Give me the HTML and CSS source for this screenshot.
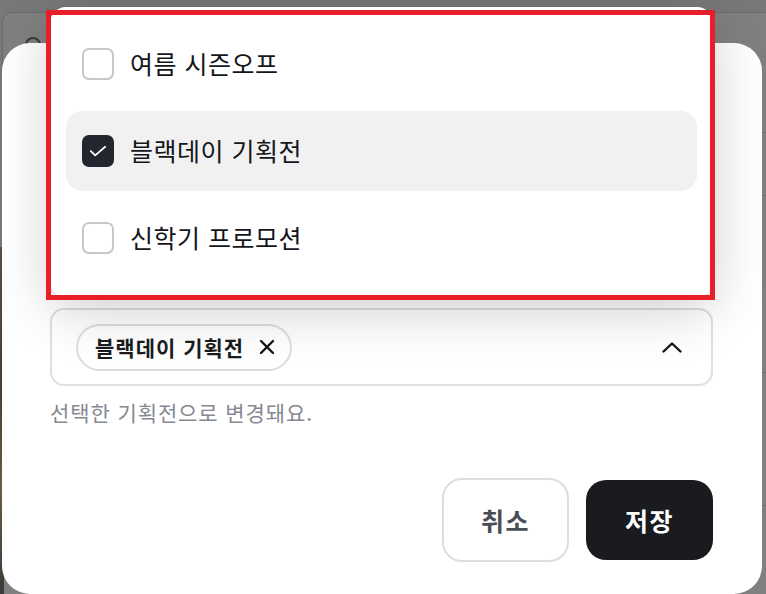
FILE: index.html
```html
<!DOCTYPE html>
<html lang="ko">
<head>
<meta charset="utf-8">
<title>기획전 선택</title>
<link rel="stylesheet" href="styles.css">
</head>
<body>
<div class="page">
  <div class="card">
    <div class="card-head"><span class="avatar"></span></div>
    <div class="card-body">
      <div class="photo"></div>
      <div class="rows">
        <div class="row r1"></div>
        <div class="row r2"></div>
        <div class="row r3"></div>
        <div class="row r4"></div>
      </div>
    </div>
  </div>
</div>

<div class="modal">
  <div class="select">
    <span class="chip">블랙데이 기획전
      <svg class="chip-x" width="16" height="16" viewBox="0 0 16 16"><path d="M2 2L14 14M14 2L2 14" stroke="#141518" stroke-width="2.4" stroke-linecap="round"/></svg>
    </span>
    <svg class="chev" width="20" height="11" viewBox="0 0 20 11"><path d="M1.5 9.5L10 1.5L18.5 9.5" fill="none" stroke="#141518" stroke-width="2.4" stroke-linecap="round" stroke-linejoin="round"/></svg>
  </div>
  <p class="helper">선택한 기획전으로 변경돼요.</p>
  <div class="actions">
    <button class="btn btn-cancel">취소</button>
    <button class="btn btn-save">저장</button>
  </div>
</div>

<div class="popover">
  <div class="option">
    <span class="box"></span>
    <span class="label">여름 시즌오프</span>
  </div>
  <div class="option selected">
    <span class="box checked">
      <svg width="32" height="32" viewBox="0 0 32 32"><path d="M8.8 16.2L13.2 20.4L23.2 11.8" fill="none" stroke="#fff" stroke-width="1.8" stroke-linecap="round" stroke-linejoin="round"/></svg>
    </span>
    <span class="label">블랙데이 기획전</span>
  </div>
  <div class="option">
    <span class="box"></span>
    <span class="label">신학기 프로모션</span>
  </div>
</div>

<div class="highlight"></div>
</body>
</html>
```

FILE: styles.css
```css
* { box-sizing: border-box; }

html, body {
  margin: 0;
  padding: 0;
}

body {
  width: 766px;
  height: 594px;
  overflow: hidden;
  position: relative;
  background: #787878;
  font-family: "Noto Sans CJK KR", "Noto Sans", sans-serif;
}

/* dimmed page beneath */
.page {
  padding-top: 12px;
  height: 594px;
}

.card {
  margin-left: 2px;
  height: 582px;
  border-top: 1px solid #6c6c6c;
  border-left: 1px solid #6c6c6c;
  border-top-left-radius: 10px;
  background: #808080;
  display: flex;
  flex-direction: column;
}

.card-head {
  height: 40px;
  padding: 24px 0 0 22px;
}

.avatar {
  display: block;
  width: 16px;
  height: 16px;
  border: 2px solid #3a3a3a;
  border-radius: 50%;
}

.card-body {
  flex: 1;
  display: flex;
  justify-content: space-between;
}

.photo {
  width: 4px;
  margin-top: 194px;
  margin-left: -3px;
  background: linear-gradient(#5a4e44, #4a3d32 40%, #6a5a48 70%, #3e3a36);
}

.rows {
  width: 30px;
  display: flex;
  flex-direction: column;
}

.row { border-bottom: 1px solid #6e6e6e; }
.r1 { height: 80px; }
.r2 { height: 63px; }
.r3 { height: 177px; }
.r4 { height: 133px; }

/* modal */
.modal {
  position: absolute;
  left: 2px;
  top: 43px;
  width: 760px;
  height: 551px;
  background: #fff;
  border-radius: 28px;
  padding: 265px 49px 0 48px;
}

.select {
  height: 78px;
  border: 2px solid #dedfe3;
  border-radius: 14px;
  display: flex;
  align-items: center;
  justify-content: space-between;
  padding: 0 29px 0 24px;
}

.chip {
  height: 47px;
  border: 2px solid #dcdde2;
  border-radius: 24px;
  display: flex;
  align-items: center;
  gap: 15px;
  padding: 0 15px 0 17px;
  font-size: 21px;
  letter-spacing: 1px;
  font-weight: 700;
  color: #1b1c20;
  background: #fff;
}

.chip-x { display: block; }
.chev { display: block; }

.helper {
  margin: 12px 0 0 0;
  font-size: 21px;
  letter-spacing: 0.9px;
  line-height: 28px;
  color: #868991;
}

.actions {
  margin-top: 52px;
  display: flex;
  justify-content: flex-end;
  align-items: center;
  gap: 17px;
}

.btn {
  font-family: "Noto Sans CJK KR", "Noto Sans", sans-serif;
  font-size: 25px;
  letter-spacing: 1.5px;
  font-weight: 700;
  border-radius: 20px;
  display: flex;
  align-items: center;
  justify-content: center;
  padding: 0;
}

.btn-cancel {
  width: 127px;
  height: 84px;
  background: #fff;
  border: 2px solid #dcdde2;
  color: #4a4d55;
}

.btn-save {
  width: 127px;
  height: 80px;
  background: #1a1b1f;
  border: none;
  color: #fff;
}

/* dropdown popover */
.popover {
  position: absolute;
  left: 50px;
  top: 7px;
  width: 663px;
  height: 290px;
  background: #fff;
  border-radius: 16px;
  box-shadow: 0 12px 56px rgba(0, 0, 0, 0.2);
  padding: 17px 16px;
  display: flex;
  flex-direction: column;
  gap: 7px;
}

.option {
  height: 80px;
  border-radius: 16px;
  display: flex;
  align-items: center;
  gap: 16px;
  padding-left: 16px;
}

.option.selected { background: #f1f1f2; }

.box {
  width: 32px;
  height: 32px;
  border: 2px solid #c5c7cc;
  border-radius: 7px;
  background: #fff;
  flex: none;
}

.box.checked {
  border: none;
  background: #23262e;
}

.box svg { display: block; }

.label {
  font-size: 25px;
  letter-spacing: 0.5px;
  font-weight: 400;
  color: #15161a;
  margin-top: -2px;
}

/* annotation frame */
.highlight {
  position: absolute;
  left: 46px;
  top: 10px;
  width: 669px;
  height: 290px;
  border: 5px solid #e81f2b;
}
```
